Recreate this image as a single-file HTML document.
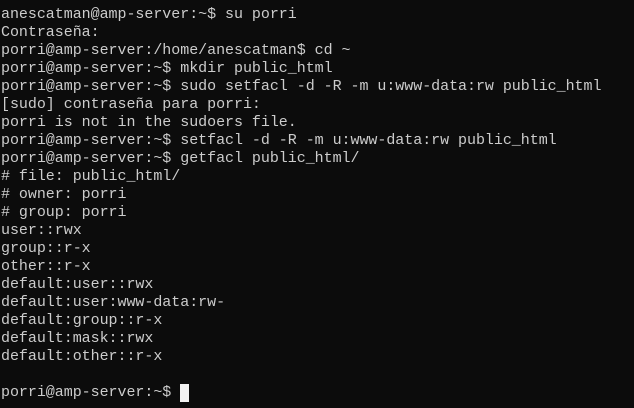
<!DOCTYPE html>
<html><head><meta charset="utf-8"><style>
html,body{margin:0;padding:0;background:#0c0c0c;width:634px;height:408px;overflow:hidden}
pre{margin:0;padding:6px 0 0 1px;font-family:"Liberation Mono",monospace;font-size:15px;line-height:18px;color:#cccccc;letter-spacing:-0.04px}
.c{display:inline-block;width:9px;height:18px;background:#f2f2f2;vertical-align:top}
</style></head><body><pre>anescatman@amp-server:~$ su porri
Contraseña:
porri@amp-server:/home/anescatman$ cd ~
porri@amp-server:~$ mkdir public_html
porri@amp-server:~$ sudo setfacl -d -R -m u:www-data:rw public_html
[sudo] contraseña para porri:
porri is not in the sudoers file.
porri@amp-server:~$ setfacl -d -R -m u:www-data:rw public_html
porri@amp-server:~$ getfacl public_html/
# file: public_html/
# owner: porri
# group: porri
user::rwx
group::r-x
other::r-x
default:user::rwx
default:user:www-data:rw-
default:group::r-x
default:mask::rwx
default:other::r-x

porri@amp-server:~$ <span class="c"></span></pre></body></html>
